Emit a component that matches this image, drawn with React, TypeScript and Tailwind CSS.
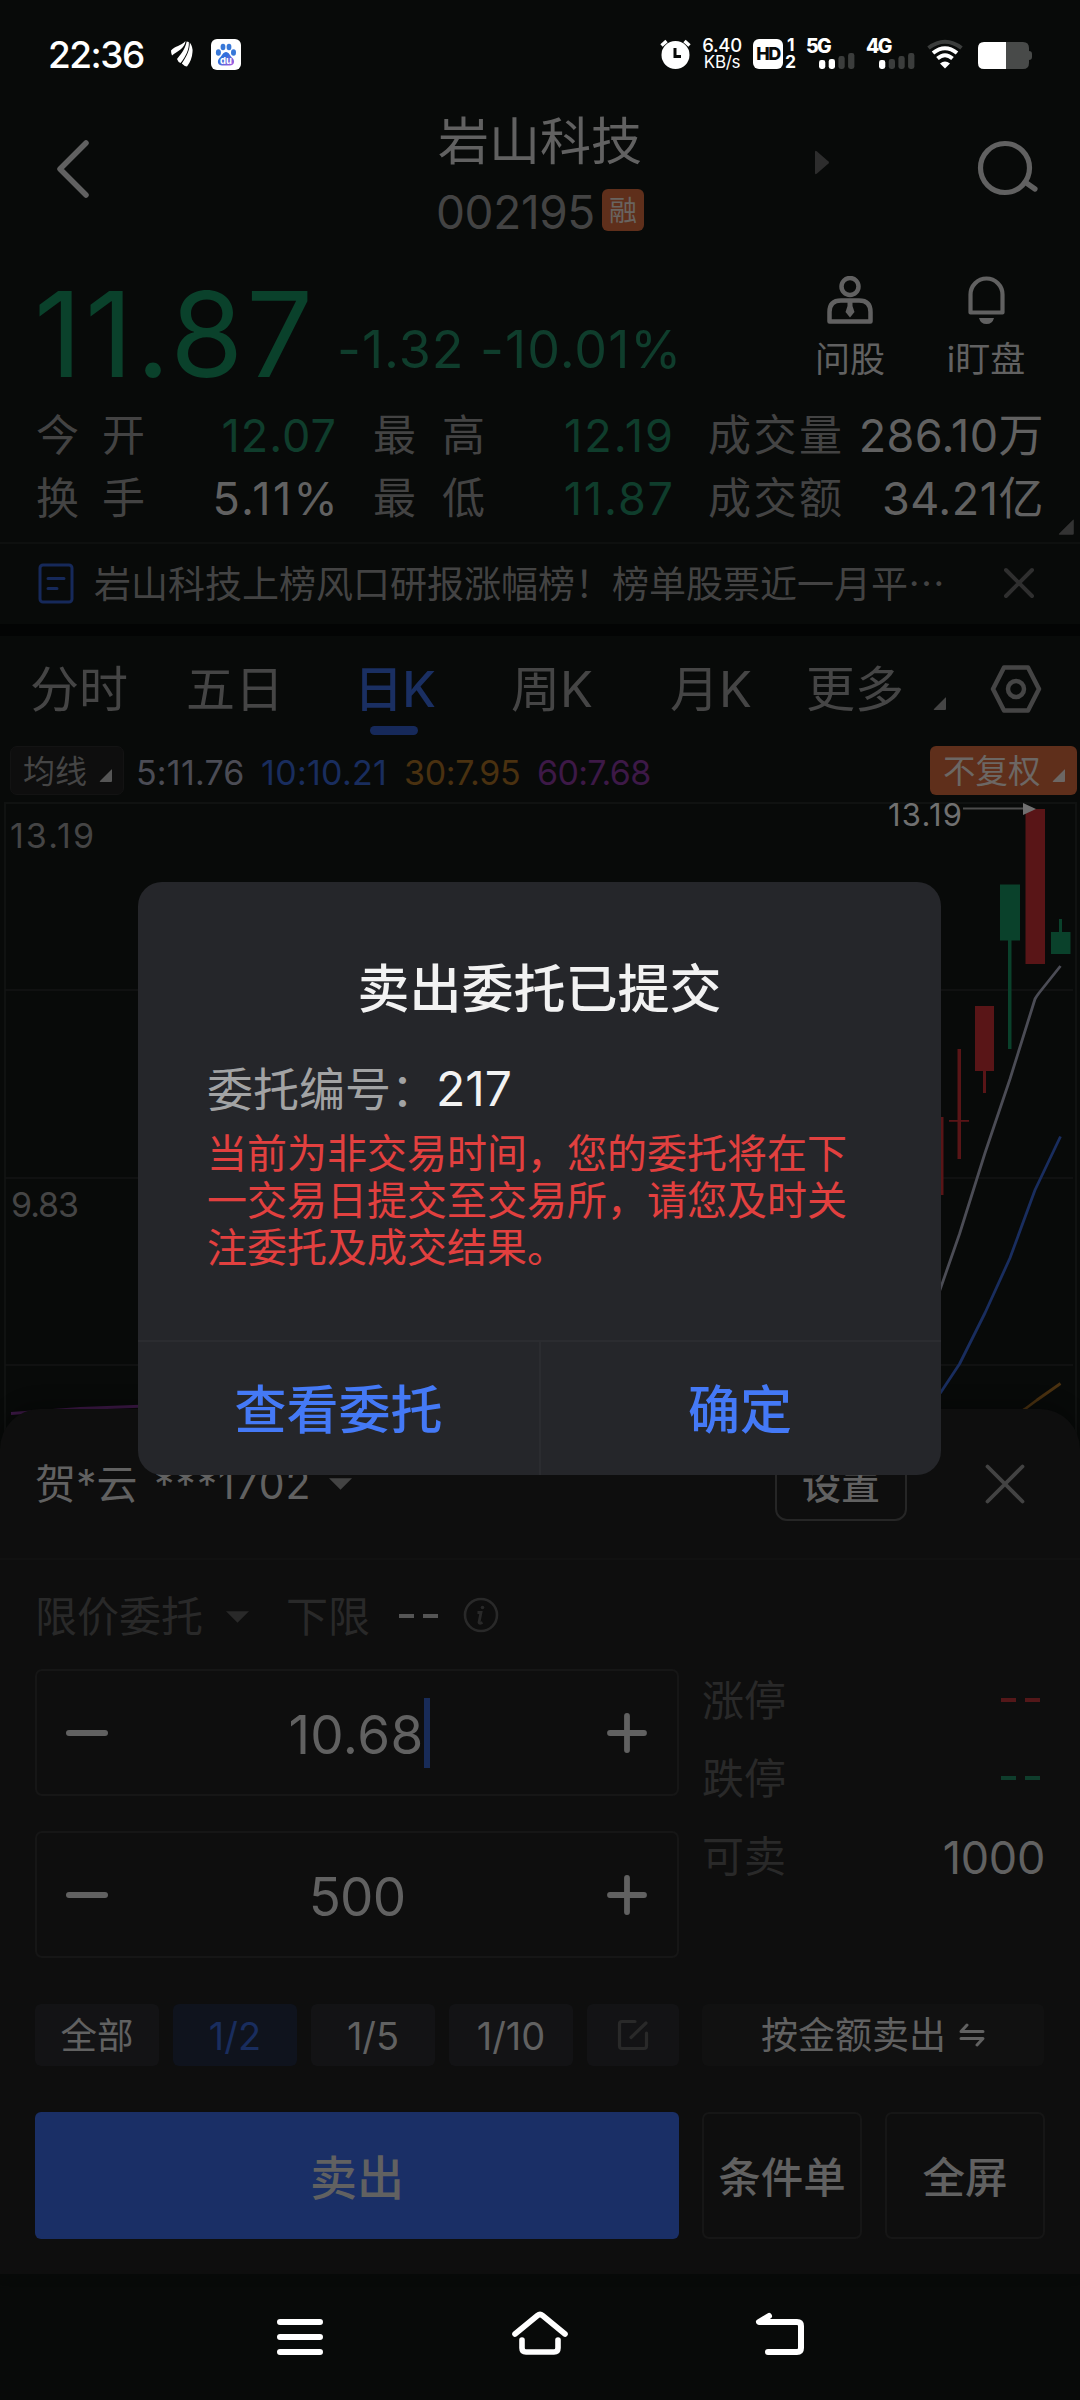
import type { ReactNode } from "react";

const quotes = [
  [
    { label: ["今", "开"], value: "12.07", color: "text-[#0f3d2c] tracking-[1px]" },
    { label: ["最", "高"], value: "12.19", color: "text-[#0f3d2c] tracking-[2px] -mr-[2px]" },
    { label: ["成", "交", "量"], value: "286.10万", color: "text-[#616161] tracking-[0.4px]" },
  ],
  [
    { label: ["换", "手"], value: "5.11%", color: "text-[#616161] tracking-[2.3px] -mr-[3px]" },
    { label: ["最", "低"], value: "11.87", color: "text-[#0f3d2c] tracking-[1.900px] -mr-[2px]" },
    { label: ["成", "交", "额"], value: "34.21亿", color: "text-[#616161] tracking-[0.5px]" },
  ],
];

const limits = [
  { label: "涨停", value: "--", color: "text-[#541719]" },
  { label: "跌停", value: "--", color: "text-[#0f3d2c]" },
  { label: "可卖", value: "1000", color: "text-[#616161]" },
];

const gridLines = [990, 1178, 1365];

function Corner({ className }: { className: string }) {
  return (
    <svg className={className} viewBox="0 0 14 14" fill="currentColor">
      <path d="M13 0.5V12q0 1-1 1H1.5Q0 13 1 12L12 1Q13 0 13 0.5Z" />
    </svg>
  );
}

function Caret({ className }: { className: string }) {
  return (
    <svg className={className} viewBox="0 0 24 12" fill="currentColor">
      <path d="M0 0h24L12 12Z" />
    </svg>
  );
}

function Dashes({ className }: { className: string }) {
  return (
    <span className={`flex gap-[9px] ${className}`}>
      <i className="block h-[4px] w-[15px] bg-current" />
      <i className="block h-[4px] w-[15px] bg-current" />
    </span>
  );
}

function Signal({ label, on }: { label: string; on: number }) {
  return (
    <div className="h-[30px] w-[48px]">
      <div className="-ml-[1px] h-[14px] text-[19.500px] leading-[15px] font-extrabold tracking-[-1.8px]">{label}</div>
      <svg className="ml-[12px] h-[16px] w-[36px]" viewBox="0 0 36 16">
        {[9, 10, 13, 16].map((h, i) => (
          <rect key={i} x={i * 9.7} y={16 - h} width="6.3" height={h} rx="2.4" fill={i < on ? "#fff" : "#3b3d3c"} />
        ))}
      </svg>
    </div>
  );
}

function StatusBar() {
  return (
    <div className="flex h-[108px] items-center pr-[48px] pl-[48px] text-white">
      <div className="w-[123px] text-[37px] leading-none font-medium tracking-[-1.5px]">22:36</div>
      <svg className="h-[26px] w-[22px]" viewBox="0 0 22 26" fill="currentColor">
        <path d="M0 9.500C4 5 10 5 14.500 0C14 7 7 10 1 14.500Q0 12 0 9.500Z" />
        <path d="M6 18C9 14 14 9 15.700 0.5L17.800 1C18.500 8 14.500 16 9.500 22Q7 21 6 18Z" />
        <path d="M10.800 22.500C16 15 18.800 9 18.800 1.500Q22 6 21.500 11Q21 19 16 25.500Q13 25 10.800 22.500Z" />
      </svg>
      <svg className="ml-[18px] h-[31px] w-[30px]" viewBox="0 0 30 31">
        <defs>
          <linearGradient id="paw" x1="0" y1="0" x2="1" y2="1">
            <stop offset="0.4" stopColor="#3370dc" />
            <stop offset="1" stopColor="#b45be0" />
          </linearGradient>
        </defs>
        <rect width="30" height="31" rx="6" fill="#fff" />
        <g fill="#3878d8">
          <ellipse cx="7.400" cy="13.500" rx="2.500" ry="3.200" />
          <ellipse cx="12" cy="8" rx="2.400" ry="3.200" />
          <ellipse cx="18" cy="8" rx="2.400" ry="3.200" />
          <ellipse cx="22.500" cy="13.500" rx="2.500" ry="3.200" />
        </g>
        <path d="M15 13c3 0 4 4 6.500 6c3 3 1.500 7.500-2.500 7.500h-8c-4 0-5.500-4.500-2.500-7.500C11 17 12 13 15 13Z" fill="url(#paw)" />
        <text x="15" y="24.500" textAnchor="middle" fontSize="9.500" fontWeight="700" fill="#fff">du</text>
      </svg>

      <div className="ml-auto flex h-[30px] items-start">
        <svg className="h-[30px] w-[31px]" viewBox="0 0 31 30">
          <circle cx="15.500" cy="16" r="14" fill="#fff" />
          <path d="M1.500 6.500 6.500 2M29.500 6.500 24.500 2" stroke="#fff" strokeWidth="3.400" />
          <path d="M15 9v8.500h6" fill="none" stroke="#080a09" strokeWidth="3" />
        </svg>
        <div className="ml-[11px] w-[40px] text-center text-[18.500px] leading-[17px] tracking-[-0.3px]">
          <div className="-mt-[2px] font-medium">6.40</div>
          <div className="text-[17px]">KB/s</div>
        </div>
        <div className="ml-[11px] flex h-[30px] w-[30px] items-center justify-center rounded-[6px] bg-white text-[18px] leading-none font-extrabold tracking-[-1.6px] text-[#080a09]">
          HD
        </div>
        <div className="ml-[2px] w-[22px] text-[17.500px] leading-[17px] font-bold">
          <div className="-mt-[3px] pl-[2px]">1</div>
          <div>2</div>
        </div>
        <Signal label="5G" on={2} />
        <div className="w-[12px]" />
        <Signal label="4G" on={1} />
        <svg className="ml-[12px] h-[30px] w-[36px]" viewBox="0 0 36 30" fill="none" strokeWidth="4">
          <path d="M1.500 9Q18-3.500 34.500 9" stroke="#3b3d3c" />
          <path d="M6 14Q18 4.500 30 14" stroke="#fff" />
          <path d="M10.500 19.500Q18 13 25.500 19.500" stroke="#fff" />
          <path d="M13 24.500Q18 20.500 23 24.500L18 29.500Z" fill="#fff" />
        </svg>
        <svg className="ml-[15px] h-[30px] w-[54px]" viewBox="0 0 54 30">
          <path d="M28 3h17q6 0 6 6v3q3 0 3 3v3q0 3-3 3v3q0 6-6 6H28Z" fill="#484a49" />
          <path d="M28 3H6Q0 3 0 9v15q0 6 6 6h22Z" fill="#fff" />
        </svg>
      </div>
    </div>
  );
}

function Header() {
  return (
    <div className="flex h-[144px] text-[#616161]">
      <svg className="mt-[31px] ml-[56px] h-[60px] w-[34px]" viewBox="0 0 34 60" fill="none" stroke="currentColor" strokeWidth="5.500" strokeLinecap="round" strokeLinejoin="round">
        <path d="M30 4 4 30 30 56" />
      </svg>
      <div className="ml-[346px] w-[220px]">
        <div className="mt-[6px] ml-[2px] h-[56px] text-[51px] leading-[56px] whitespace-nowrap">岩山科技</div>
        <div className="mt-[19px] flex h-[42px] items-center">
          <span className="w-[166px] pt-[4px] text-[46px] leading-none tracking-[-0.4px] text-[#434343]">002195</span>
          <span className="flex h-[42px] w-[42px] items-center justify-center rounded-[6px] bg-[#5f2f1b] pt-[1px] text-[28px] leading-none text-[#696460]">融</span>
        </div>
      </div>
      <svg className="mt-[42px] ml-[159px] h-[25px] w-[15px] text-[#2d2d2d]" viewBox="0 0 15 25" fill="currentColor">
        <path d="M0 2Q0 0 2 1.500L13.500 11.500Q14.500 12.500 13.500 13.500L2 23.500Q0 25 0 23Z" />
      </svg>
      <svg className="mt-[32px] ml-[147px] h-[56px] w-[64px]" viewBox="0 0 64 56" fill="none" stroke="currentColor" strokeWidth="5.200" strokeLinecap="round">
        <circle cx="28" cy="28" r="24.500" />
        <path d="M48 42l10 7" />
      </svg>
    </div>
  );
}

function Price() {
  return (
    <div className="flex h-[151px] text-[#0a412b]">
      <div className="ml-[34px] w-[302px] pt-[24px] text-[118px] leading-[116px] tracking-[3px] whitespace-nowrap">11.87</div>
      <div className="w-[440px] pt-[68px] pl-[1px] text-[52px] leading-[60px] tracking-[1px] whitespace-nowrap text-[#0f3d2c]">-1.32 -10.01%</div>
      <div className="mt-[24px] ml-[22px] flex w-[104px] flex-col items-center text-[#616161]">
        <svg className="h-[48px] w-[46px]" viewBox="0 0 46 48" fill="none" stroke="currentColor" strokeWidth="4.500">
          <circle cx="23" cy="10.500" r="8.500" />
          <path d="M2.500 45.500V36Q2.500 24.500 14 24.500h18q11.500 0 11.500 11.500v9.500Z" strokeLinejoin="round" />
          <path d="M20.500 26h5v4l2 6-4.500 5.500L18.500 36l2-6Z" fill="currentColor" stroke="none" />
        </svg>
        <div className="mt-[14px] text-[35px] leading-[42px]">问股</div>
      </div>
      <div className="mt-[24px] ml-[32px] flex w-[104px] flex-col items-center text-[#616161]">
        <svg className="h-[48px] w-[37px]" viewBox="0 0 37 48" fill="none" stroke="currentColor" strokeWidth="4.200">
          <path d="M2.500 36.500V18.500a16 16 0 0 1 32 0v18Z" strokeLinejoin="round" />
          <path d="M11 42h15q-1.500 6-7.500 6T11 42Z" fill="currentColor" stroke="none" />
        </svg>
        <div className="mt-[14px] text-[35px] leading-[42px] whitespace-nowrap">i盯盘</div>
      </div>
    </div>
  );
}

function QuoteTable() {
  return (
    <div className="relative h-[139px] pt-[1px] text-[43px] leading-[63px]">
      {quotes.map((row, i) => (
        <div key={i} className="flex h-[63px] pl-[36px]">
          {row.map((cell, j) => (
            <div key={j} className={["flex w-[301px]", "ml-[36px] flex w-[300px]", "ml-[35px] flex w-[336px]"][j]}>
              <div className={["flex w-[109px] justify-between", "flex w-[112px] justify-between", "flex w-[134px] justify-between"][j] + " shrink-0 text-[#434343]"}>
                {cell.label.map((c) => (
                  <span key={c}>{c}</span>
                ))}
              </div>
              <div className={`ml-auto text-[45px] whitespace-nowrap ${cell.color}`}>{cell.value}</div>
            </div>
          ))}
        </div>
      ))}
      <Corner className="absolute right-[5px] bottom-[6px] h-[17px] w-[17px] text-[#333333]" />
    </div>
  );
}

function Notice() {
  return (
    <div className="flex h-[82px] items-center border-t-2 border-[#0e100f] pb-[2px] pl-[38px]">
      <svg className="h-[41px] w-[36px] text-[#16295a]" viewBox="0 0 36 41" fill="none" stroke="currentColor" strokeWidth="3">
        <rect x="2" y="2" width="32" height="37" rx="3" />
        <path d="M10 15.500h16M10 25.500h9" strokeLinecap="round" />
      </svg>
      <div className="ml-[20px] w-[909px] text-[37px] leading-[50px] whitespace-nowrap text-[#434343]">
        岩山科技上榜风口研报涨幅榜！榜单股票近一月平<span className="font-['Noto_Sans_CJK_SC']">⋯</span>
      </div>
      <svg className="h-[32px] w-[32px] text-[#2f2f2f]" viewBox="0 0 32 32" stroke="currentColor" strokeWidth="4" strokeLinecap="round">
        <path d="M3 3 29 29M29 3 3 29" />
      </svg>
    </div>
  );
}

function Tabs() {
  return (
    <div className="relative flex h-[109px] pt-[24px] pl-[30px] text-[49px] leading-[60px] whitespace-nowrap text-[#454545]">
      <div className="w-[156px]">分时</div>
      <div className="w-[168px]">五日</div>
      <div className="w-[157px] text-[#1a2f62]">
        <span className="font-medium tracking-[-0.8px]">日K</span>
        <div className="mt-[6px] ml-[16px] h-[9px] w-[48px] rounded-full bg-[#16295a]" />
      </div>
      <div className="w-[159px]">周K</div>
      <div className="w-[136px]">月K</div>
      <div className="w-[127px]">更多</div>
      <Corner className="mt-[37px] h-[14px] w-[14px]" />
      <svg className="mt-[5px] ml-[43px] h-[48px] w-[52px]" viewBox="0 0 52 48" fill="none" stroke="currentColor" strokeWidth="4.500">
        <path d="M14 2.500h24L49 24 38 45.500H14L3 24Z" strokeLinejoin="round" />
        <circle cx="26" cy="24" r="8" />
      </svg>
    </div>
  );
}

function Averages() {
  return (
    <div className="flex h-[51px] items-center pl-[10px] text-[34px] leading-[48px] whitespace-nowrap">
      <div className="flex h-[49px] w-[114px] items-center rounded-[7px] border border-[#131313] bg-[#0e0e0e] pl-[12px] text-[32px] text-[#454545]">
        <span className="pt-[2px]">均线</span>
        <Corner className="mt-[11px] ml-[12px] h-[14px] w-[14px] text-[#555]" />
      </div>
      <div className="ml-[12px] flex pt-[4px]">
        <div className="w-[125px] tracking-[0.2px] text-[#4b4c55]">5:11.76</div>
        <div className="w-[143px] tracking-[0.3px] text-[#192d5e]">10:10.21</div>
        <div className="w-[133px] tracking-[-0.3px] text-[#4a3110]">30:7.95</div>
        <div className="tracking-[-0.7px] text-[#3d1947]">60:7.68</div>
      </div>
      <div className="mr-[3px] ml-auto flex h-[49px] w-[147px] items-center rounded-[6px] bg-[#5f2f1b] pl-[13px] text-[32.500px] text-[#6c6764]">
        <span className="pt-[2px]">不复权</span>
        <Corner className="mt-[11px] ml-[11px] h-[14px] w-[14px]" />
      </div>
    </div>
  );
}

function Chart() {
  return (
    <svg className="block h-[654px] w-[1080px]" viewBox="0 796 1080 654" fill="none">
      <path d="M5 1450V803H1076V1450" stroke="#101211" strokeWidth="2" />
      {gridLines.map((y) => (
        <path key={y} d={`M5 ${y}H1073`} stroke="#131514" strokeWidth="1.500" />
      ))}
      <g fontSize="34" fill="#454545">
        <text x="10" y="848" textLength="84">13.19</text>
        <text x="11" y="1217" textLength="68">9.83</text>
      </g>
      <text x="888" y="826" fontSize="31" textLength="74" fill="#707070">13.19</text>
      <path d="M963 808.500H1024" stroke="#4c4c4c" strokeWidth="2" />

      {/* K线 */}
      <g fill="#0a412b">
        <rect x="1000" y="884.500" width="20" height="56" />
        <rect x="1008" y="940" width="3.500" height="109" />
        <rect x="1051" y="932" width="19.500" height="22" />
        <rect x="1059" y="919" width="3" height="13" />
      </g>
      <g fill="#591517">
        <rect x="1025.500" y="809" width="19.500" height="155" />
        <rect x="975" y="1006" width="19" height="65" />
        <rect x="983" y="1070" width="3" height="23" />
        <rect x="957.500" y="1049" width="3.500" height="110" />
        <rect x="949" y="1120" width="20" height="1.800" />
        <rect x="924" y="1117" width="19.500" height="78" />
      </g>
      <path d="M1023 803v12l13-6Z" fill="#707070" />

      {/* 均线 */}
      <g strokeWidth="2.800" strokeLinejoin="round">
        <path d="M920 1345L941 1287L959.500 1234L985 1153L1010 1079L1035 999Q1036 997 1039 993L1060.500 966" stroke="#4b4c55" />
        <path d="M920 1416L941 1392L959.500 1364L985 1313L1010 1258L1035 1190L1060.500 1136.500" stroke="#192d5e" />
        <path d="M1012 1418L1025 1409L1037 1400L1060.500 1383.500" stroke="#4a3110" />
        <path d="M11 1413.500L80 1408.500L160 1405.500" stroke="#3d1947" />
      </g>
    </svg>
  );
}

function Stepper({ children }: { children: ReactNode }) {
  return (
    <div className="flex h-[127px] w-[644px] items-center justify-between rounded-[7px] border-[2.500px] border-[#161616] pr-[29px] pl-[29px] text-[#616161]">
      <div className="h-[6px] w-[42px] rounded-full bg-current" />
      <div className="flex items-center text-[53px] leading-none">{children}</div>
      <svg className="h-[42px] w-[42px]" viewBox="0 0 42 42" stroke="currentColor" strokeWidth="5.800" strokeLinecap="round">
        <path d="M4 21H38M21 4V38" />
      </svg>
    </div>
  );
}

function TradeSheet() {
  return (
    <div className="relative -mt-[41px] h-[865px] rounded-t-[40px] bg-[#0e0e0e] shadow-[0_-6px_18px_rgba(0,0,0,0.3)]">
      <div className="flex h-[151px] items-center border-b-2 border-[#111111] text-[#616161]">
        <div className="ml-[35px] flex w-[294px] pt-[1px] text-[41px] leading-[50px] whitespace-nowrap">
          <span className="w-[119px]">贺*云</span>
          <span className="tracking-[0.8px]">***1702</span>
        </div>
        <Caret className="h-[12px] w-[23px] text-[#434343]" />
        <div className="ml-[423px] flex h-[74px] w-[132px] items-center justify-center rounded-[12px] border-2 border-[#262626] pt-[4px] text-[39px] font-medium">设置</div>
        <svg className="ml-[78px] h-[40px] w-[40px] text-[#434343]" viewBox="0 0 40 40" stroke="currentColor" strokeWidth="3.800" strokeLinecap="round">
          <path d="M2.500 2.500 37.500 37.500M37.500 2.500 2.500 37.500" />
        </svg>
      </div>

      <div className="flex h-[109px] items-center pl-[35px] text-[42px] leading-[60px] whitespace-nowrap text-[#292929]">
        <div className="w-[191px] pt-[4px]">限价委托</div>
        <Caret className="mt-[4px] h-[12px] w-[23px]" />
        <div className="ml-[37px] w-[113px] pt-[4px]">下限</div>
        <Dashes className="mt-[2px] text-[#555]" />
        <svg className="ml-[25px] h-[36px] w-[36px]" viewBox="0 0 36 36" fill="none" stroke="currentColor">
          <circle cx="18" cy="18" r="16" strokeWidth="2.600" />
          <path d="M14.500 15.500h3.500L16 25.500q0 1.500 3.500 0" strokeWidth="2.800" />
          <circle cx="19.500" cy="10.500" r="1.800" fill="currentColor" stroke="none" />
        </svg>
      </div>

      <div className="flex pl-[35px]">
        <div className="flex flex-col gap-[35px]">
          <Stepper>
            <span className="pt-[6px] pl-[4px] tracking-[0.4px]">10.68</span>
            <i className="block h-[70px] w-[6px] bg-[#182b58]" />
          </Stepper>
          <Stepper>
            <span className="pt-[6px] tracking-[-0.8px]">500</span>
          </Stepper>
        </div>
        <div className="-mt-[8px] ml-[23px] w-[343px]">
          {limits.map((item) => (
            <div key={item.label} className="flex h-[78px] items-center justify-between text-[42px] leading-[60px] text-[#292929]">
              <span className="pt-[1px]">{item.label}</span>
              {item.value === "--" ? (
                <Dashes className={`mr-[5px] ${item.color}`} />
              ) : (
                <span className={`pt-[3px] text-[45px] tracking-[-0.3px] ${item.color}`}>{item.value}</span>
              )}
            </div>
          ))}
        </div>
      </div>

      <div className="mt-[46px] flex h-[62px] gap-[14px] pl-[35px] text-[38px] leading-[64px] text-[#616161]">
        <div className="w-[124px] rounded-[6px] bg-[#131315] text-center text-[36.500px]">全部</div>
        <div className="w-[124px] rounded-[6px] bg-[#0f131d] text-center text-[#192d5e]">1/2</div>
        <div className="w-[124px] rounded-[6px] bg-[#131315] text-center">1/5</div>
        <div className="w-[124px] rounded-[6px] bg-[#131315] text-center">1/10</div>
        <div className="flex w-[92px] items-center justify-center rounded-[6px] bg-[#131315] text-[#292929]">
          <svg className="h-[32px] w-[32px]" viewBox="0 0 32 32" fill="none" stroke="currentColor" strokeWidth="3.200" strokeLinecap="round" strokeLinejoin="round">
            <path d="M18 2.500H5Q2.500 2.500 2.500 5v22q0 2.500 2.500 2.500h22q2.500 0 2.500-2.500V14M29 4 14 18.500" />
          </svg>
        </div>
        <div className="ml-[9px] flex w-[342px] items-center justify-center rounded-[6px] bg-[#111111] text-[37px]">
          <span className="pt-[2px]">按金额卖出</span>
          <svg className="ml-[13px] h-[24px] w-[26px]" viewBox="0 0 26 24" fill="none" stroke="currentColor" strokeWidth="3" strokeLinecap="round" strokeLinejoin="round">
            <path d="M24 8.500H2L8 2M2 15.500H24L18 22" />
          </svg>
        </div>
      </div>

      <div className="mt-[46px] flex h-[127px] pl-[35px] leading-[131px] text-[#616161]">
        <div className="w-[644px] rounded-[6px] bg-[#1a2f66] text-center text-[47px] font-medium">卖出</div>
        <div className="ml-[23px] flex w-[160px] items-center justify-center rounded-[7px] border-[2.500px] border-[#161616] pt-[4px] text-[42.500px] font-medium whitespace-nowrap">条件单</div>
        <div className="ml-[23px] flex w-[160px] items-center justify-center rounded-[7px] border-[2.500px] border-[#161616] pt-[4px] text-[42.500px] font-medium">全屏</div>
      </div>
    </div>
  );
}

function NavBar() {
  return (
    <div className="flex h-[126px] items-start pt-[36px] pl-[276px] text-white">
      <svg className="h-[46px] w-[48px]" viewBox="0 0 48 46" stroke="currentColor" strokeWidth="6" strokeLinecap="round">
        <path d="M4 12H44M4 27H44M4 42H44" />
      </svg>
      <svg className="ml-[186px] h-[46px] w-[60px]" viewBox="0 0 60 46" fill="none" stroke="currentColor" strokeWidth="5.600" strokeLinecap="round" strokeLinejoin="round">
        <path d="M5 24 27.500 5.500Q30 3.500 32.500 5.500L55 24M12 30v8q0 4 4 4h28q4 0 4-4v-8" />
      </svg>
      <svg className="ml-[184px] h-[46px] w-[52px]" viewBox="0 0 52 46" fill="none" stroke="currentColor" strokeWidth="6" strokeLinecap="round" strokeLinejoin="round">
        <path d="M15 6 5 12H43Q47 12 47 16V38Q47 42 43 42H14" />
      </svg>
    </div>
  );
}

function OrderDialog() {
  return (
    <div className="absolute top-[882px] left-[138px] flex h-[593px] w-[803px] flex-col rounded-[24px] bg-[#25262a]">
      <div className="mt-[78px] text-center text-[52px] leading-[60px] font-medium text-[#f2f2f2]">卖出委托已提交</div>
      <div className="mt-[36px] ml-[69px] flex h-[64px] items-center text-[46px] leading-[64px] whitespace-nowrap text-[#a2a3a4]">
        <span className="w-[229px] pt-[1px]">委托编号：</span>
        <span className="pt-[2px] text-[48px] text-[#f2f2f2]">217</span>
      </div>
      <p className="mt-[10px] ml-[69px] w-[645px] text-[40px] leading-[47px] text-[#e2403f]">
        当前为非交易时间，您的委托将在下
        <br />
        一交易日提交至交易所，请您及时关
        <br />
        注委托及成交结果。
      </p>
      <div className="mt-auto flex h-[135px] border-t-2 border-[#2b2c30] text-[52px] leading-[138px] font-medium text-[#4479f6]">
        <div className="h-[133px] w-[403px] border-r-2 border-[#2b2c30] text-center">查看委托</div>
        <div className="w-[398px] text-center">确定</div>
      </div>
    </div>
  );
}

export default function App() {
  return (
    <div className="relative h-[2400px] w-[1080px] overflow-hidden bg-[#080a09] font-['Inter','Noto_Sans_CJK_SC',sans-serif]">
      <StatusBar />
      <Header />
      <Price />
      <QuoteTable />
      <Notice />
      <div className="h-[12px] bg-[#030404]" />
      <Tabs />
      <Averages />
      <Chart />
      <TradeSheet />
      <NavBar />
      <OrderDialog />
    </div>
  );
}
